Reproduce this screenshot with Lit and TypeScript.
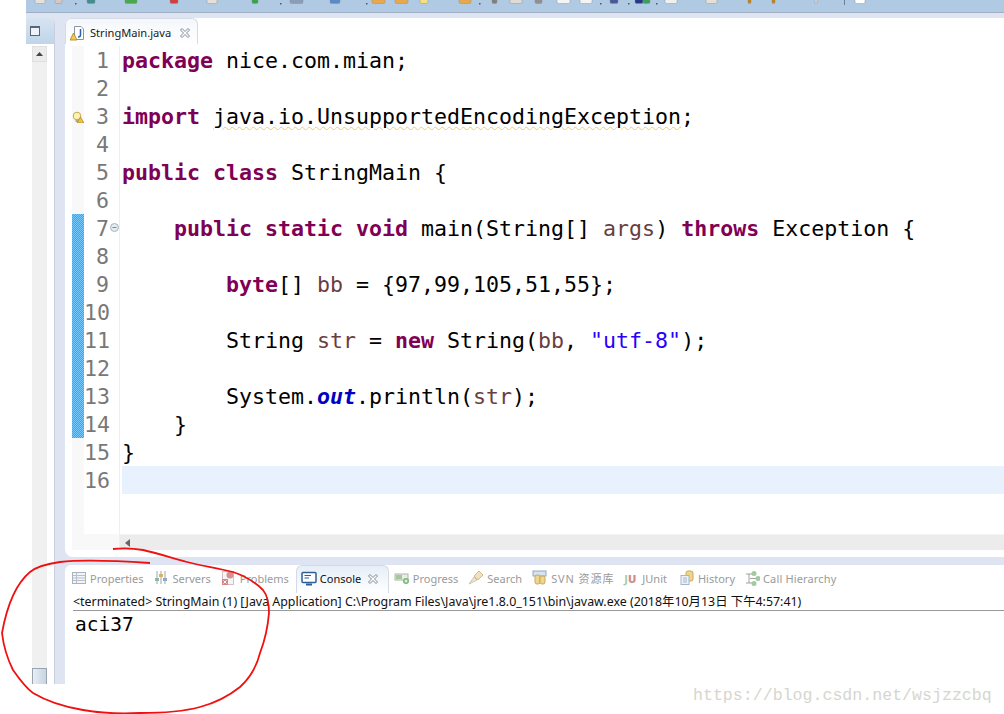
import { LitElement, html, css, svg } from "lit";
import { customElement } from "lit/decorators.js";

const k = (s: string) => html`<span class="kw">${s}</span>`;
const v = (s: string) => html`<span class="var">${s}</span>`;

const closeIcon = html`<svg class="close" width="12" height="12" viewBox="0 0 12 12"><path d="M1.500 3 3 1.500 6 4.500 9 1.500 10.500 3 7.500 6 10.500 9 9 10.500 6 7.500 3 10.500 1.500 9 4.500 6Z" fill="#fff" stroke="#7c8894" stroke-width="1"/></svg>`;

const icons: Record<string, unknown> = {
  properties: svg`<rect x="1.500" y="2.500" width="13" height="11" fill="#f2f4f7" stroke="#a9b3bf"/><path d="M2 5.500H14M2 8H14M2 10.500H14M5.500 3V13" stroke="#b7c0ca"/>`,
  servers: svg`<path d="M4 1V14M8 1V14M12 1V14" stroke="#9aa5ad"/><rect x="2" y="8" width="4" height="3" fill="#8fb8a2"/><rect x="6" y="4" width="4" height="3" fill="#d8b266"/><rect x="10" y="8" width="4" height="3" fill="#8fa8c8"/>`,
  problems: svg`<rect x="1.500" y="1.500" width="11" height="13" fill="#f5f5f7" stroke="#d5c0c4"/><circle cx="9" cy="5" r="3.500" fill="#dc8d8d"/><rect x="1" y="9" width="6" height="6" fill="#d98484"/><path d="M2.500 10.500 5.500 13.500M5.500 10.500 2.500 13.500" stroke="#fff"/>`,
  console: svg`<rect x="1" y="1.500" width="14" height="10" rx="1" fill="#fff" stroke="#2c5f96" stroke-width="1.500"/><path d="M3.500 4.500H10M3.500 7H8" stroke="#2c5f96"/><path d="M5 12.500H11V14.500H5Z" fill="#2c5f96"/>`,
  progress: svg`<rect x="1" y="4" width="13" height="6" fill="#e7eee5" stroke="#a9b8a8"/><rect x="2" y="5" width="6" height="4" fill="#a6c79c"/><circle cx="12" cy="11" r="3" fill="#7db47a"/><path d="M12 9.500V12.500M10.500 11H13.500" stroke="#fff"/>`,
  search: svg`<path d="M1 14 6 7 9 10Z" fill="#ece6d6" stroke="#c9c3b2"/><path d="M6 6 11 1 15 5 10 10Z" fill="#f1e1be" stroke="#d2b987"/>`,
  svn: svg`<rect x="1" y="1" width="13" height="5" fill="#d6e2f0" stroke="#8fa8c6"/><rect x="3" y="5" width="5" height="9" rx="2" fill="#f0d68c" stroke="#c9a95a"/><rect x="8" y="6" width="5" height="8" rx="2" fill="#f0d68c" stroke="#c9a95a"/>`,
  history: svg`<rect x="7" y="1" width="7" height="10" rx="2" fill="#f0d68c" stroke="#c9a95a"/><rect x="2" y="5.500" width="8" height="9" fill="#eef2f8" stroke="#a5b4ca"/><path d="M4 8H8M4 10H8M4 12H8" stroke="#a5b4ca"/>`,
  hierarchy: svg`<path d="M2 4H9M2 13H9M6 8.500H12M5 4V13" stroke="#9aa59c" fill="none"/><circle cx="10" cy="3.500" r="2.500" fill="#a3c9a0"/><circle cx="14" cy="8.500" r="2.500" fill="#a3c9a0"/><circle cx="10" cy="13.500" r="2.500" fill="#a3c9a0"/>`,
};

const tabs = [
  { label: "Properties", icon: "properties" },
  { label: "Servers", icon: "servers" },
  { label: "Problems", icon: "problems" },
  { label: "Console", icon: "console", active: true },
  { label: "Progress", icon: "progress" },
  { label: "Search", icon: "search" },
  { label: "SVN 资源库", icon: "svn" },
  { label: "JUnit", icon: "junit" },
  { label: "History", icon: "history" },
  { label: "Call Hierarchy", icon: "hierarchy" },
];

const lines: unknown[] = [
  html`${k("package")} nice.com.mian;`,
  "",
  html`${k("import")} <span class="warn">java.io.UnsupportedEncodingException</span>;`,
  "",
  html`${k("public")} ${k("class")} StringMain {`,
  "",
  html`    ${k("public")} ${k("static")} ${k("void")} main(String[] ${v("args")}) ${k("throws")} Exception {`,
  "",
  html`        ${k("byte")}[] ${v("bb")} = {97,99,105,51,55};`,
  "",
  html`        String ${v("str")} = ${k("new")} String(${v("bb")}, <span class="str">"utf-8"</span>);`,
  "",
  html`        System.<span class="fld">out</span>.println(${v("str")});`,
  "    }",
  "}",
  "",
];

const toolbar: [number, number, string][] = [
  [35, 10, "#e4e0dc"], [55, 7, "#d8c8c0"], [87, 8, "#3f8f8f"], [125, 12, "#49a84a"], [170, 8, "#d04040"],
  [207, 10, "#e6e0da"], [252, 6, "#3aa24a"], [290, 13, "#8a9cb8"], [330, 10, "#5a8ac8"], [372, 13, "#e8a850"],
  [395, 13, "#e8a850"], [420, 8, "#f4e080"], [459, 12, "#e8a850"], [492, 5, "#808080"], [510, 12, "#e0dcd4"],
  [535, 7, "#909090"], [557, 13, "#f4f4f4"], [580, 12, "#f4f4f4"], [610, 8, "#4a5a98"], [635, 8, "#223a88"],
  [643, 7, "#3aa060"], [665, 12, "#f0f0f0"], [706, 11, "#e4e0d8"], [748, 3, "#c88010"], [772, 3, "#c88010"],
  [815, 2, "#e4e0d8"], [855, 10, "#ffffff"],
];
const dots = [75, 280, 366, 479, 600, 628, 656];

@customElement("app-root")
export class AppRoot extends LitElement {
  static styles = css`
    :host { display: block; width: 1004px; height: 714px; position: relative; overflow: hidden; background: #fff; font-family: "Noto Sans", "Noto Sans CJK SC", sans-serif; }
    .frame { margin-left: 26px; height: 684px; display: flex; flex-direction: column; background: #dfe4f3; }
    .toolbar { height: 12px; background: #b0cae3; border-bottom: 1px solid #9fb0c4; display: block; flex: none; }
    .toolbar svg { display: block; }
    .work { flex: 1; display: flex; padding-top: 5px; min-height: 0; }
    .side { width: 28px; flex: none; background: #fff; border-right: 1px solid #c9cfdd; border-top-right-radius: 6px; display: flex; flex-direction: column; overflow: hidden; }
    .side-head { height: 26px; flex: none; box-sizing: border-box; padding: 8px 0 0 4px; background: linear-gradient(#d6e4f2, #bfd5ea); }
    .side-head svg { display: block; }
    .vscroll { flex: 1; width: 15px; margin: 2px 0 0 6px; background: #f0f0f0; display: flex; flex-direction: column; justify-content: space-between; }
    .vbtn { height: 16px; background: #ececec; border: 1px solid #e0e0e0; box-sizing: border-box; display: flex; align-items: center; justify-content: center; }
    .thumb { height: 16px; background: linear-gradient(90deg, #e8eef5, #c8d4e0); border: 1px solid #98a4b0; border-bottom: 0; box-sizing: border-box; }
    .main { flex: 1; min-width: 0; margin-left: 10px; display: flex; flex-direction: column; }
    .editor { height: 539px; flex: none; background: #fff; border-radius: 6px 0 0 8px; display: flex; flex-direction: column; }
    .ed-tabs { height: 26px; flex: none; display: flex; }
    .ed-tab { width: 133px; box-sizing: border-box; border: 1px solid #d4dae6; border-bottom: 0; border-radius: 6px 6px 0 0; display: flex; align-items: center; padding: 2px 0 0 4px; font-size: 11.100px; color: #1a1a1a; background: linear-gradient(#f4f7fb, #fff); white-space: nowrap; }
    .ed-tab .name { margin-left: 4px; width: 82px; flex: none; }
    .ed-tab .close { margin-left: 7px; }
    .ed-body { flex: 1; min-height: 0; margin-left: 7px; padding-top: 2px; display: flex; flex-direction: column; }
    .rows { flex: 1; min-height: 0; display: flex; flex-direction: column; }
    .row { height: 28px; flex: none; display: grid; grid-template-columns: 12px 36px 1fr; font-family: "DejaVu Sans Mono", monospace; font-size: 21.6px; line-height: 30px; }
    .row.fill { flex: 1; height: auto; }
    .mark { background: #f8f8f8; display: flex; align-items: center; justify-content: center; }
    .mark.changed { background: repeating-conic-gradient(#35a6f8 0 25%, #78c8fc 0 50%) 0 0 / 2px 2px; }
    .num { color: #787878; text-align: right; padding-right: 10px; border-right: 1px solid #efefef; position: relative; box-sizing: border-box; }
    .fold { position: absolute; left: 26px; top: 9px; display: block; }
    .code { margin-left: 2px; white-space: pre; color: #000; overflow: hidden; height: 28px; }
    .code.cur { background: #e8f2fe; }
    .kw { color: #7f0055; font-weight: 700; }
    .var { color: #6a3e3e; }
    .str { color: #2a00ff; }
    .fld { color: #0000c0; font-weight: 700; font-style: italic; }
    .warn { text-decoration: underline wavy #e8cc78 1px; text-underline-offset: 2px; }
    .hscroll { height: 16px; flex: none; display: flex; }
    .hs-left { width: 48px; background: #f8f8f8; border-right: 1px solid #efefef; box-sizing: border-box; }
    .hs-track { flex: 1; background: #ececec; border-top: 1px solid #f4f4f4; display: flex; align-items: center; padding-left: 5px; }
    .ed-foot { height: 7px; flex: none; }
    .console { flex: 1; min-height: 0; margin-top: 8px; background: #fff; border-radius: 6px 0 0 0; display: flex; flex-direction: column; }
    .c-tabs { height: 28px; flex: none; display: flex; align-items: center; padding-left: 6px; font-size: 11px; color: #9a9a9a; white-space: nowrap; }
    .c-tab { display: flex; align-items: center; gap: 3px; margin-right: 10px; height: 100%; box-sizing: border-box; padding-bottom: 2px; }
    .c-tab.active { color: #111; margin: 0 5px 0 -3px; width: 93px; box-sizing: border-box; padding-left: 4px; background: linear-gradient(#e6eef7, #fff); border: 1px solid #d4dae6; border-bottom: 0; border-radius: 6px 6px 0 0; }
    .c-tab.active .close { margin-left: 3px; }
    .c-tab.t-svn { letter-spacing: 0.9px; }
    .c-tab.t-junit { margin-right: 12px; }
    .c-tab.t-history { margin-right: 9px; }
    .c-tab.t-hierarchy { letter-spacing: 0.15px; }
    .c-tab svg { flex: none; display: block; }
    .junit { width: 15px; flex: none; font-weight: 700; font-size: 11px; color: #a8c8a0; }
    .junit b { color: #d08c8c; }
    .c-head { margin-left: 8px; height: 18px; flex: none; box-sizing: border-box; padding-top: 1px; border-bottom: 1px solid #999; font-size: 12.400px; line-height: 16px; color: #111; white-space: nowrap; }
    .out { padding: 2px 0 0 10px; font-family: "DejaVu Sans Mono", monospace; font-size: 19.500px; line-height: 24px; color: #000; }
    .ink { position: absolute; left: 0; top: 0; pointer-events: none; }
    .mark-text { position: absolute; left: 693px; top: 686px; font-family: "Liberation Mono", monospace; font-size: 16.600px; line-height: 20px; color: #d6d6ce; white-space: nowrap; }
  `;

  private tabIcon(name: string) {
    if (name === "junit") return html`<span class="junit">J<b>U</b></span>`;
    return html`<svg width="16" height="16" viewBox="0 0 16 16">${icons[name]}</svg>`;
  }

  render() {
    return html`
      <div class="frame">
        <div class="toolbar">
          <svg width="978" height="12" viewBox="26 0 978 12">
            ${toolbar.map(([x, w, c]) => svg`<rect x=${x} y="-4" width=${w} height="7.500" rx="1.500" fill=${c} stroke="#8a8a8a" stroke-opacity=".4"/>`)}
            ${dots.map((x) => svg`<path d="M${x} 3h1.500v1.500h-1.500Z" fill="#556"/>`)}
            <path d="M844.500 0V5" stroke="#6f7e90"/>
          </svg>
        </div>
        <div class="work">
          <div class="side">
            <div class="side-head">
              <svg width="11" height="11" viewBox="0 0 11 11"><rect x=".5" y=".5" width="9" height="9" fill="#eef3f9" stroke="#5a6570"/><path d="M1 1.500H9" stroke="#5a6570"/></svg>
            </div>
            <div class="vscroll">
              <div class="vbtn"><svg width="7" height="4" viewBox="0 0 7 4"><path d="M3.500 0 7 4H0Z" fill="#444"/></svg></div>
              <div class="thumb"></div>
            </div>
          </div>
          <div class="main">
            <div class="editor">
              <div class="ed-tabs">
                <div class="ed-tab">
                  <svg width="16" height="16" viewBox="0 0 16 16"><path d="M4.500 1.500H11L13.500 4V14.500H4.500Z" fill="#fff" stroke="#8c95a3"/><path d="M10.500 4V10Q10.500 12 8 12" fill="none" stroke="#2c5fa8" stroke-width="1.500"/><path d="M3.500 8 7 15H0Z" fill="#f2c94c" stroke="#a88420" stroke-width=".8"/></svg>
                  <span class="name">StringMain.java</span>
                  ${closeIcon}
                </div>
              </div>
              <div class="ed-body">
                <div class="rows">
                  ${lines.map((line, i) => {
                    const n = i + 1;
                    return html`<div class="row">
                      <div class="mark ${n >= 7 && n <= 14 ? "changed" : ""}">
                        ${n === 3
                          ? html`<svg width="12" height="12" viewBox="0 0 12 12"><circle cx="5" cy="5" r="3.800" fill="#fdf2b0" stroke="#c8a850"/><rect x="3.500" y="8.500" width="3" height="2.500" fill="#a8a8a8"/><path d="M8.500 6 12 12H5Z" fill="#f0c040" stroke="#a07820" stroke-width=".6"/></svg>`
                          : ""}
                      </div>
                      <div class="num">${n}${n === 7
                        ? html`<svg class="fold" width="9" height="9" viewBox="0 0 9 9"><circle cx="4.500" cy="4.500" r="4" fill="#e4ecf2" stroke="#a4b4c0"/><path d="M2.500 4.500H6.500" stroke="#7a8a98"/></svg>`
                        : ""}</div>
                      <div class="code ${n === 16 ? "cur" : ""}">${line}</div>
                    </div>`;
                  })}
                  <div class="row fill"><div class="mark"></div><div class="num"></div><div></div></div>
                </div>
                <div class="hscroll">
                  <div class="hs-left"></div>
                  <div class="hs-track"><svg width="5" height="8" viewBox="0 0 5 8"><path d="M0 4 5 0V8Z" fill="#666"/></svg></div>
                </div>
                <div class="ed-foot"></div>
              </div>
            </div>
            <div class="console">
              <div class="c-tabs">
                ${tabs.map((t) => html`<div class="c-tab t-${t.icon} ${t.active ? "active" : ""}">
                  ${this.tabIcon(t.icon)}<span>${t.label}</span>${t.active ? closeIcon : ""}
                </div>`)}
              </div>
              <div class="c-head">&lt;terminated&gt; StringMain (1) [Java Application] C:\\Program Files\\Java\\jre1.8.0_151\\bin\\javaw.exe (2018年10月13日 下午4:57:41)</div>
              <div class="out">aci37</div>
            </div>
          </div>
        </div>
      </div>
      <svg class="ink" width="1004" height="714" viewBox="0 0 1004 714">
        <path d="M150 563C120 561 85 559 60 562C45 564 35 568 30 572C18 582 8 600 2 633C4 650 8 660 13 670C20 680 26 688 33 693C48 702 65 707 83 710C100 713 120 714 140 713C160 713 185 711 200 707C215 703 230 695 240 687C250 678 257 665 260 653C265 640 268 625 269 613C269 603 267 595 263 590C255 582 245 576 233 572C218 568 203 566 187 562C172 558 157 553 143 550C132 548 122 548 113 549" fill="none" stroke="#f01010" stroke-width="1.800"/>
      </svg>
      <div class="mark-text">https://blog.csdn.net/wsjzzcbq</div>
    `;
  }
}
